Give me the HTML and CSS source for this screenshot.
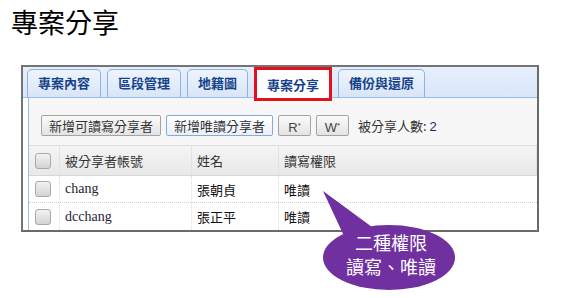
FILE: index.html
```html
<!DOCTYPE html>
<html lang="zh-Hant">
<head>
    <meta charset="UTF-8">
    <meta name="viewport" content="width=device-width, initial-scale=1.0">
    <title>專案分享</title>
    <link rel="stylesheet" href="styles.css">
</head>
<body>
    <div class="page">
        <h1 class="title">專案分享</h1>

        <div class="panel">
            <div class="tab-strip">
                <div class="tab">專案內容</div>
                <div class="tab">區段管理</div>
                <div class="tab">地籍圖</div>
                <div class="tab active">專案分享</div>
                <div class="tab">備份與還原</div>
            </div>

            <div class="tab-body">
                <div class="toolbar">
                    <button class="btn">新增可讀寫分享者</button>
                    <button class="btn focus">新增唯讀分享者</button>
                    <button class="btn small">R<sup>*</sup></button>
                    <button class="btn small">W<sup>*</sup></button>
                    <span class="count">被分享人數: <span class="num">2</span></span>
                </div>

                <div class="grid">
                    <div class="row head">
                        <div class="cell check"><span class="box"></span></div>
                        <div class="cell">被分享者帳號</div>
                        <div class="cell">姓名</div>
                        <div class="cell">讀寫權限</div>
                    </div>
                    <div class="row">
                        <div class="cell check"><span class="box"></span></div>
                        <div class="cell account">chang</div>
                        <div class="cell">張朝貞</div>
                        <div class="cell">唯讀</div>
                    </div>
                    <div class="row">
                        <div class="cell check"><span class="box"></span></div>
                        <div class="cell account">dcchang</div>
                        <div class="cell">張正平</div>
                        <div class="cell">唯讀</div>
                    </div>
                </div>
            </div>
        </div>

        <svg class="callout" viewBox="0 0 582 298" width="582" height="298">
            <polygon points="323,191 372,227 344,236" fill="#7030a0"/>
            <ellipse cx="389" cy="257.5" rx="66" ry="32.5" fill="#7030a0"/>
            <text x="391" y="250" text-anchor="middle">二種權限</text>
            <text x="391" y="274" text-anchor="middle">讀寫、唯讀</text>
        </svg>
    </div>
</body>
</html>
```

FILE: styles.css
```css
* {
    margin: 0;
    padding: 0;
    box-sizing: border-box;
}

body {
    font-family: "Noto Sans CJK TC", "Noto Sans", sans-serif;
    background-color: #ffffff;
    color: #222;
}

.page {
    position: relative;
    width: 582px;
    height: 298px;
    overflow: hidden;
}

.title {
    font-size: 27px;
    font-weight: 400;
    line-height: 40px;
    height: 65px;
    padding: 2px 0 0 11px;
    color: #000;
}

.panel {
    margin-left: 21px;
    width: 518px;
    border: 2px solid #747474;
    border-right-color: #6a6a6a;
    border-bottom-color: #6a6a6a;
}

/* tabs */

.tab-strip {
    display: flex;
    gap: 6px;
    height: 31px;
    padding: 2px 0 0 4px;
    background: linear-gradient(#e6effc, #d9e6f9);
    border-bottom: 1px solid #99bbe8;
}

.tab {
    height: 28px;
    padding: 0 10px;
    line-height: 26px;
    font-size: 13px;
    font-weight: 700;
    color: #15428b;
    background: linear-gradient(#eef4fd, #d8e5f8);
    border: 1px solid #8db2e3;
    border-bottom: none;
    border-radius: 5px 5px 0 0;
}

.tab.active {
    position: relative;
    z-index: 1;
    height: 34px;
    margin-top: -2px;
    padding: 0 10px;
    line-height: 30px;
    color: #15428b;
    background: #ffffff;
    border: 3px solid #e3101e;
    border-radius: 0;
}

.tab-body {
    margin-left: 5px;
    border-left: 1px solid #99bbe8;
}

/* toolbar */

.toolbar {
    display: flex;
    align-items: center;
    gap: 5px;
    height: 48px;
    padding: 8px 0 0 12px;
    background: #f7f7f7;
    border-bottom: 1px solid #dcdcdc;
}

.btn {
    height: 21px;
    padding: 0 7px;
    font-family: "Noto Sans CJK TC", sans-serif;
    font-size: 13px;
    line-height: 19px;
    color: #333;
    background: linear-gradient(#fbfbfb, #e3e3e3);
    border: 1px solid #a3a3a3;
    border-radius: 2px;
}

.btn.focus {
    background: linear-gradient(#ffffff, #eaf1fa);
    border-color: #86a9d6;
}

.btn.small {
    min-width: 33px;
    font-family: "Liberation Sans", sans-serif;
    font-size: 13px;
    color: #444;
}

.btn sup {
    font-size: 8px;
    vertical-align: 4px;
}

.count {
    margin-left: 4px;
    font-size: 13px;
    color: #333;
}

.count .num {
    font-family: "Liberation Sans", sans-serif;
    color: #1a2c6c;
}

/* grid */

.row {
    display: grid;
    grid-template-columns: 31px 132px 87px 1fr;
    height: 27px;
    font-size: 13px;
    border-bottom: 1px dotted #cfcfcf;
}

.row:last-child {
    border-bottom: none;
}

.row.head {
    height: 30px;
    background: linear-gradient(#f4f4f4, #e9e9e9);
    border-bottom: 1px solid #d6d6d6;
    color: #333;
}

.cell {
    display: flex;
    align-items: center;
    padding-left: 5px;
    border-right: 1px dotted #dadada;
    color: #111;
}

.row.head .cell {
    border-right: 1px solid #e2e2e2;
    color: #333;
}

.cell:last-child {
    border-right: none;
}

.cell.check {
    padding-left: 6px;
}

.cell.account {
    font-family: "Liberation Serif", serif;
    font-size: 14px;
    color: #2a2238;
}

.box {
    width: 16px;
    height: 16px;
    border: 1px solid #a9a9a9;
    border-radius: 3px;
    background: linear-gradient(#f2f2f2, #d4d4d4);
}

/* callout */

.callout {
    position: absolute;
    left: 0;
    top: 0;
    pointer-events: none;
}

.callout text {
    font-family: "Liberation Serif", "Noto Sans CJK TC", serif;
    font-size: 18px;
    fill: #ffffff;
}
```
